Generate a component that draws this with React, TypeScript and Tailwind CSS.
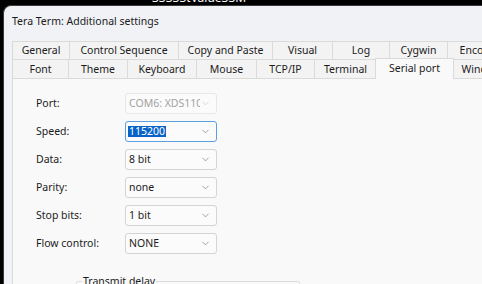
import { ChevronDown } from "lucide-react";

const row1 = [
  { label: "General", w: 58 },
  { label: "Control Sequence", w: 109 },
  { label: "Copy and Paste", w: 94 },
  { label: "Visual", w: 60 },
  { label: "Log", w: 57 },
  { label: "Cygwin", w: 58 },
  { label: "Encoding", w: 70 },
];

const row2 = [
  { label: "Font", w: 57 },
  { label: "Theme", w: 59 },
  { label: "Keyboard", w: 69 },
  { label: "Mouse", w: 60 },
  { label: "TCP/IP", w: 58 },
  { label: "Terminal", w: 62 },
  { label: "Serial port", w: 75, active: true },
  { label: "Window", w: 60 },
];

const fields = [
  { label: "Port:", value: "COM6: XDS110 Class", disabled: true },
  { label: "Speed:", value: "115200", focused: true },
  { label: "Data:", value: "8 bit" },
  { label: "Parity:", value: "none" },
  { label: "Stop bits:", value: "1 bit" },
  { label: "Flow control:", value: "NONE" },
];

const font = { fontFamily: '"Noto Sans", "Open Sans", sans-serif' };

function Combo({ value, disabled, focused }: { value: string; disabled?: boolean; focused?: boolean }) {
  const border = focused ? "border-[#5b9fe0]" : disabled ? "border-[#e8e8e8]" : "border-[#d4d4d4]";
  return (
    <div className={`flex h-[21px] w-[92px] items-center rounded-[3px] border ${border} bg-[#fbfbfb] pl-[2px] pr-[5px]`}>
      <div className="min-w-0 flex-1 overflow-hidden whitespace-nowrap">
        {focused ? (
          <span className="bg-[#0a64c8] px-px text-white">{value}</span>
        ) : (
          <span className={`px-px ${disabled ? "text-[#a2a2a2]" : "text-[#1b1b1b]"}`}>{value}</span>
        )}
      </div>
      <ChevronDown size={11} strokeWidth={1.5} className={disabled ? "text-[#c8c8c8]" : "text-[#7a7a7a]"} />
    </div>
  );
}

export default function App() {
  return (
    <div className="relative h-[284px] w-[482px] overflow-hidden bg-black text-[10.5px] leading-none text-[#1b1b1b]" style={font}>
      <div className="h-[5px] overflow-hidden pl-[152px]">
        <div className="-mt-[9px] text-[12px] leading-[13px] text-white">33333tValue33M</div>
      </div>
      <div className="ml-[3px] h-[279px] overflow-hidden rounded-tl-[8px] border-l border-t border-[#3a3a3a] bg-[#f0f2f5]">
        <div className="flex h-[35px] items-center pb-[4px] pl-[8px]">Tera Term: Additional settings</div>
        <div className="pl-[8px]">
          <div className="flex h-[18px]">
            {row1.map((t, i) => (
              <div
                key={t.label}
                className={`flex shrink-0 items-center justify-center overflow-hidden whitespace-nowrap border-t border-r border-[#dadada] bg-[#f3f3f3] ${i === 0 ? "border-l" : ""}`}
                style={{ width: t.w }}
              >
                {t.label}
              </div>
            ))}
          </div>
          <div className="flex h-[19px] items-end">
            {row2.map((t, i) =>
              t.active ? (
                <div
                  key={t.label}
                  className="relative z-10 -mx-[2px] -mb-px flex h-[21px] shrink-0 items-center justify-center whitespace-nowrap border-x border-t border-[#dadada] bg-[#f9f9f9] pb-[2px]"
                  style={{ width: t.w + 4 }}
                >
                  {t.label}
                </div>
              ) : (
                <div
                  key={t.label}
                  className={`flex h-[19px] shrink-0 items-center justify-center overflow-hidden whitespace-nowrap border-t border-r border-[#dadada] bg-[#f3f3f3] ${i === 0 ? "border-l" : ""}`}
                  style={{ width: t.w }}
                >
                  {t.label}
                </div>
              )
            )}
          </div>
          <div className="h-[210px] border-l border-t border-[#dadada] bg-[#f9f9f9] pl-[23px] pt-[14px]">
            <div className="flex flex-col gap-[7px]">
              {fields.map((f) => (
                <div key={f.label} className="flex items-center">
                  <div className="w-[89px]">{f.label}</div>
                  <Combo value={f.value} disabled={f.disabled} focused={f.focused} />
                </div>
              ))}
            </div>
            <div className="ml-[40px] mt-[27px] h-[20px] w-[224px] rounded-[2px] border border-[#dcdcdc]">
              <div className="-mt-[6px] ml-[5px] w-fit bg-[#f9f9f9] px-px">Transmit delay</div>
            </div>
          </div>
        </div>
      </div>
    </div>
  );
}
